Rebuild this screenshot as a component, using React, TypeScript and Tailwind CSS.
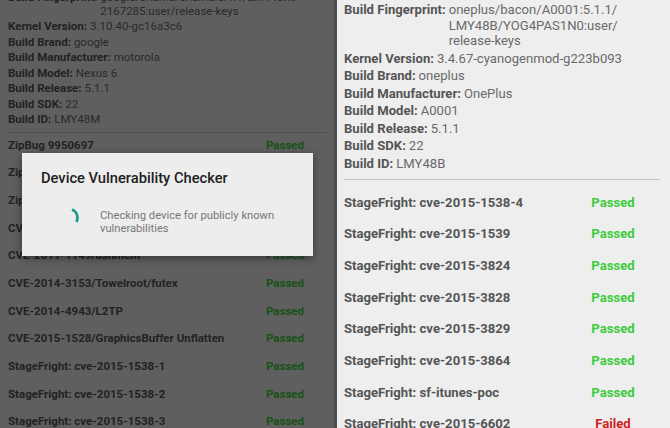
const leftInfo: [string, string[]][] = [
  ['Build Fingerprint:', ['google/shamu/shamu:5.1.1/LMY48M/', '2167285:user/release-keys']],
  ['Kernel Version:', ['3.10.40-gc16a3c6']],
  ['Build Brand:', ['google']],
  ['Build Manufacturer:', ['motorola']],
  ['Build Model:', ['Nexus 6']],
  ['Build Release:', ['5.1.1']],
  ['Build SDK:', ['22']],
  ['Build ID:', ['LMY48M']],
];

const rightInfo: [string, string[]][] = [
  ['Build Fingerprint:', ['oneplus/bacon/A0001:5.1.1/', 'LMY48B/YOG4PAS1N0:user/', 'release-keys']],
  ['Kernel Version:', ['3.4.67-cyanogenmod-g223b093']],
  ['Build Brand:', ['oneplus']],
  ['Build Manufacturer:', ['OnePlus']],
  ['Build Model:', ['A0001']],
  ['Build Release:', ['5.1.1']],
  ['Build SDK:', ['22']],
  ['Build ID:', ['LMY48B']],
];

const leftTests: [string, boolean][] = [
  ['ZipBug 9950697', true],
  ['ZipBug 9695860', true],
  ['ZipBug 8219321', true],
  ['CVE-2013-6282/put_user', true],
  ['CVE-2011-1149/ashmem', true],
  ['CVE-2014-3153/Towelroot/futex', true],
  ['CVE-2014-4943/L2TP', true],
  ['CVE-2015-1528/GraphicsBuffer Unflatten', true],
  ['StageFright: cve-2015-1538-1', true],
  ['StageFright: cve-2015-1538-2', true],
  ['StageFright: cve-2015-1538-3', true],
];

const rightTests: [string, boolean][] = [
  ['StageFright: cve-2015-1538-4', true],
  ['StageFright: cve-2015-1539', true],
  ['StageFright: cve-2015-3824', true],
  ['StageFright: cve-2015-3828', true],
  ['StageFright: cve-2015-3829', true],
  ['StageFright: cve-2015-3864', true],
  ['StageFright: sf-itunes-poc', true],
  ['StageFright: cve-2015-6602', false],
];

function Spinner() {
  return (
    <svg width="24" height="24" viewBox="0 0 24 24" className="shrink-0">
      <path d="M 7 3.5 A 9 9 0 0 1 11.5 16" fill="none" stroke="#1f9b8b" strokeWidth="2.6" strokeLinecap="butt" />
    </svg>
  );
}

export default function App() {
  return (
    <div className="flex w-[670px] h-[428px] overflow-hidden bg-[#eeeeee] font-['Roboto',sans-serif]">
      {/* left phone, dimmed by dialog */}
      <div className="relative w-[334px] shrink-0 overflow-hidden">
        <div className="-mt-[9px] pl-2 pr-[19px]">
          <div className="flex flex-col gap-[1.6px] text-[11.5px] leading-[13.9px]">
            {leftInfo.map(([k, v]) => (
              <div key={k} className="flex">
                <span className="shrink-0 font-bold text-[#555]">{k}</span>
                <span className="ml-[3px] text-[#6a6a6a]">
                  {v.map((l) => (
                    <span key={l} className="block whitespace-nowrap">{l}</span>
                  ))}
                </span>
              </div>
            ))}
          </div>
          <div className="mt-[5px] mr-[-12px] h-px bg-[#c4c4c4]" />
          <div className="-mt-[2px]">
            {leftTests.map(([name, ok]) => (
              <div key={name} className="flex h-[27.7px] items-center text-[11.5px]">
                <span className="flex-1 font-bold text-[#555] whitespace-nowrap">{name}</span>
                <span className={`w-[60px] text-center font-bold ${ok ? 'text-[#3ccc3c]' : 'text-[#cc2222]'}`}>
                  {ok ? 'Passed' : 'Failed'}
                </span>
              </div>
            ))}
          </div>
        </div>
        <div className="absolute inset-0 bg-black/60" />
        <div className="absolute left-[22px] top-[153px] w-[291px] h-[103px] bg-[#ededed] shadow-[0_2px_8px_rgba(0,0,0,0.45)] pl-[19px] pr-4 pt-[16px]">
          <div className="text-[14.7px] leading-[19px] font-medium text-[#212121]">Device Vulnerability Checker</div>
          <div className="mt-[21px] flex items-start">
            <div className="ml-[24px] mt-[-3px]">
              <Spinner />
            </div>
            <p className="ml-[11px] text-[11.2px] leading-[13.3px] text-[#777]">
              Checking device for publicly known
              <br />
              vulnerabilities
            </p>
          </div>
        </div>
      </div>

      <div className="w-[3px] shrink-0 bg-[#4e4e4e]" />

      {/* right phone */}
      <div className="flex-1 overflow-hidden pl-[7px] pr-[27px]">
        <div className="mt-[2px] flex flex-col gap-[1.8px] text-[13.1px] leading-[15.7px]">
          {rightInfo.map(([k, v]) => (
            <div key={k} className="flex">
              <span className="shrink-0 font-bold text-[#555]">{k}</span>
              <span className="ml-[3px] text-[#6a6a6a]">
                {v.map((l) => (
                  <span key={l} className="block whitespace-nowrap">{l}</span>
                ))}
              </span>
            </div>
          ))}
        </div>
        <div className="mt-[7px] mr-[-17px] h-px bg-[#c4c4c4]" />
        <div className="pt-[7px]">
          {rightTests.map(([name, ok]) => (
            <div key={name} className="flex h-[31.7px] items-center text-[13.1px]">
              <span className="flex-1 font-bold text-[#555] whitespace-nowrap">{name}</span>
              <span className={`w-[60px] text-center font-bold ${ok ? 'text-[#3ccc3c]' : 'text-[#cc2222]'}`}>
                {ok ? 'Passed' : 'Failed'}
              </span>
            </div>
          ))}
        </div>
      </div>
    </div>
  );
}
